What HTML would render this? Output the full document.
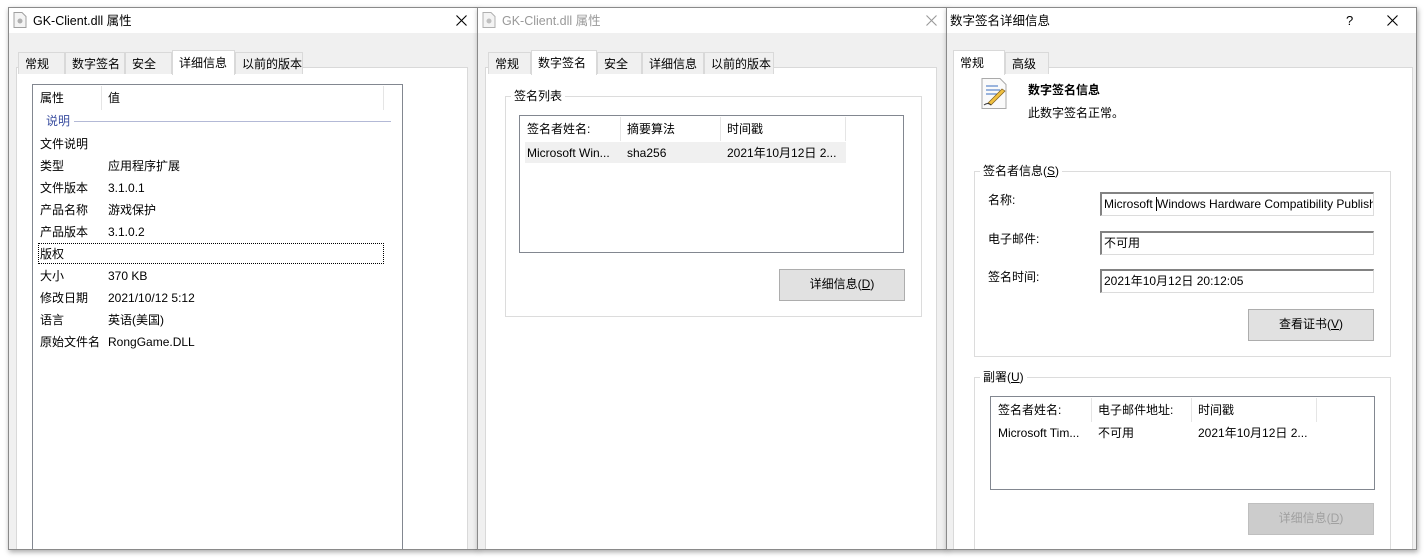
<!DOCTYPE html>
<html><head><meta charset="utf-8"><style>
*{box-sizing:border-box;margin:0;padding:0}
html,body{width:1425px;height:558px;overflow:hidden}
body{background:#fff;position:relative;font-family:"Liberation Sans","Noto Sans CJK SC",sans-serif;font-size:12px;line-height:16px;color:#000}
.a{position:absolute;white-space:nowrap;line-height:16px}
.win{position:absolute;background:#f0f0f0;border:1px solid #8a8a8a;box-shadow:1px 2px 5px rgba(0,0,0,.35);overflow:hidden}
.tb{position:absolute;left:0;right:0;top:0;height:25px;background:#fff}
.tab{position:absolute;top:44px;height:22px;border:1px solid #d9d9d9;border-bottom:none;background:#f0f0f0;padding:3px 0 0 6px;line-height:16px;white-space:nowrap}
.tab.s{top:42px;height:25px;background:#fff;z-index:2;padding-top:4px}
.panel{position:absolute;background:#fff;border:1px solid #d9d9d9}
.box{position:absolute;background:#fff;border:1px solid #828790}
.grp{position:absolute;border:1px solid #dcdcdc}
.gl{position:absolute;background:#fff;padding:0 3px;line-height:16px}
.btn{position:absolute;background:#e1e1e1;border:1px solid #adadad;text-align:center;line-height:29px}
.fld{position:absolute;background:#fff;border:1px solid #dcdcdc;border-top:2px solid #828282;border-left:2px solid #828282;padding:2px 0 0 2px;overflow:hidden;white-space:nowrap;line-height:16px}
.dv{position:absolute;width:1px;background:#e5e5e5}
.x{position:absolute;top:7px}
</style></head><body>

<!-- LEFT WINDOW -->
<div class="win" style="left:8px;top:7px;width:470px;height:543px">
 <div class="tb"></div>
 <svg class="a" style="left:4px;top:4px" width="14" height="16"><path d="M1 .5h8l4 4V15.5H1z" fill="#f4f4f4" stroke="#a0a0a0"/><circle cx="7" cy="9" r="2.5" fill="#b0b0b0"/></svg>
 <div class="a" style="left:24px;top:5px;font-size:12.5px">GK-Client.dll 属性</div>
 <svg class="x" style="left:447px" width="11" height="11"><path d="M.5.5l10 10M10.5.5l-10 10" stroke="#000" stroke-width="1.1"/></svg>
 <div class="panel" style="left:7px;top:59px;width:452px;height:500px"></div>
 <div class="tab" style="left:9px;width:47px">常规</div>
 <div class="tab" style="left:56px;width:60px">数字签名</div>
 <div class="tab" style="left:116px;width:47px">安全</div>
 <div class="tab s" style="left:163px;width:63px">详细信息</div>
 <div class="tab" style="left:226px;width:68px">以前的版本</div>
 <div class="box" style="left:23px;top:76px;width:371px;height:480px">
  <div class="a" style="left:7px;top:5px">属性</div><div class="dv" style="left:68px;top:1px;height:24px"></div>
  <div class="a" style="left:75px;top:5px">值</div><div class="dv" style="left:350px;top:1px;height:24px"></div>
  <div class="a" style="left:13px;top:28px;color:#3a4ea0">说明</div>
  <div class="a" style="left:41px;top:36px;width:317px;height:1px;background:#b3b9d6"></div>
  <div class="a" style="left:7px;top:51px">文件说明</div>
  <div class="a" style="left:7px;top:73px">类型</div><div class="a" style="left:75px;top:73px">应用程序扩展</div>
  <div class="a" style="left:7px;top:95px">文件版本</div><div class="a" style="left:75px;top:95px">3.1.0.1</div>
  <div class="a" style="left:7px;top:117px">产品名称</div><div class="a" style="left:75px;top:117px">游戏保护</div>
  <div class="a" style="left:7px;top:139px">产品版本</div><div class="a" style="left:75px;top:139px">3.1.0.2</div>
  <div class="a" style="left:5px;top:158px;width:346px;height:21px;border:1px dotted #000"></div>
  <div class="a" style="left:7px;top:161px">版权</div>
  <div class="a" style="left:7px;top:183px">大小</div><div class="a" style="left:75px;top:183px">370 KB</div>
  <div class="a" style="left:7px;top:205px">修改日期</div><div class="a" style="left:75px;top:205px">2021/10/12 5:12</div>
  <div class="a" style="left:7px;top:227px">语言</div><div class="a" style="left:75px;top:227px">英语(美国)</div>
  <div class="a" style="left:7px;top:249px">原始文件名</div><div class="a" style="left:75px;top:249px">RongGame.DLL</div>
 </div>
</div>

<!-- MIDDLE WINDOW -->
<div class="win" style="left:477px;top:7px;width:470px;height:543px">
 <div class="tb"></div>
 <svg class="a" style="left:4px;top:4px" width="14" height="16"><path d="M1 .5h8l4 4V15.5H1z" fill="#f4f4f4" stroke="#b0b0b0"/><circle cx="7" cy="9" r="2.5" fill="#c0c0c0"/></svg>
 <div class="a" style="left:24px;top:5px;font-size:12.5px;color:#999">GK-Client.dll 属性</div>
 <svg class="x" style="left:448px" width="11" height="11"><path d="M.5.5l10 10M10.5.5l-10 10" stroke="#999" stroke-width="1.1"/></svg>
 <div class="panel" style="left:7px;top:59px;width:452px;height:500px"></div>
 <div class="tab" style="left:10px;width:43px">常规</div>
 <div class="tab s" style="left:53px;width:66px">数字签名</div>
 <div class="tab" style="left:119px;width:45px">安全</div>
 <div class="tab" style="left:164px;width:62px">详细信息</div>
 <div class="tab" style="left:226px;width:70px">以前的版本</div>
 <div class="grp" style="left:27px;top:88px;width:417px;height:221px"></div>
 <div class="gl" style="left:33px;top:80px">签名列表</div>
 <div class="box" style="left:41px;top:107px;width:385px;height:138px">
  <div class="a" style="left:7px;top:5px">签名者姓名:</div><div class="dv" style="left:100px;top:1px;height:24px"></div>
  <div class="a" style="left:107px;top:5px">摘要算法</div><div class="dv" style="left:200px;top:1px;height:24px"></div>
  <div class="a" style="left:207px;top:5px">时间戳</div><div class="dv" style="left:325px;top:1px;height:24px"></div>
  <div class="a" style="left:5px;top:26px;width:321px;height:21px;background:#f0f0f0"></div>
  <div class="a" style="left:7px;top:29px">Microsoft Win...</div>
  <div class="a" style="left:107px;top:29px">sha256</div>
  <div class="a" style="left:207px;top:29px">2021年10月12日 2...</div>
 </div>
 <div class="btn" style="left:301px;top:261px;width:126px;height:32px">详细信息(<u>D</u>)</div>
</div>

<!-- RIGHT WINDOW -->
<div class="win" style="left:946px;top:7px;width:471px;height:543px">
 <div class="tb"></div>
 <div class="a" style="left:3px;top:5px;font-size:12.5px">数字签名详细信息</div>
 <div class="a" style="left:399px;top:5px;font-size:13px">?</div>
 <svg class="x" style="left:440px" width="11" height="11"><path d="M.5.5l10 10M10.5.5l-10 10" stroke="#000" stroke-width="1.1"/></svg>
 <div class="panel" style="left:6px;top:59px;width:460px;height:500px"></div>
 <div class="tab s" style="left:6px;width:52px">常规</div>
 <div class="tab" style="left:58px;width:44px">高级</div>
 <svg class="a" style="left:33px;top:70px" width="30" height="32"><path d="M2 .5h18l6 6V30.5H2z" fill="#fafafa" stroke="#aaa"/><path d="M6 8h12M6 12h14M6 16h12" stroke="#3a6ec0"/><path d="M8 25l14-14 3 2-14 14z" fill="#f0c040" stroke="#806020" stroke-width=".7"/><path d="M4 27q4-3 7 0" stroke="#333" fill="none"/></svg>
 <div class="a" style="left:81px;top:74px;font-weight:bold">数字签名信息</div>
 <div class="a" style="left:81px;top:97px">此数字签名正常。</div>
 <div class="grp" style="left:27px;top:163px;width:417px;height:186px"></div>
 <div class="gl" style="left:33px;top:155px">签名者信息(<u>S</u>)</div>
 <div class="a" style="left:41px;top:184px">名称:</div>
 <div class="fld" style="left:153px;top:184px;width:274px;height:24px">Microsoft <span style="border-left:1px solid #000">W</span>indows Hardware Compatibility Publisher</div>
 <div class="a" style="left:41px;top:223px">电子邮件:</div>
 <div class="fld" style="left:153px;top:223px;width:274px;height:24px">不可用</div>
 <div class="a" style="left:41px;top:261px">签名时间:</div>
 <div class="fld" style="left:153px;top:261px;width:274px;height:24px">2021年10月12日 20:12:05</div>
 <div class="btn" style="left:301px;top:301px;width:126px;height:32px">查看证书(<u>V</u>)</div>
 <div class="grp" style="left:27px;top:369px;width:417px;height:190px"></div>
 <div class="gl" style="left:33px;top:361px">副署(<u>U</u>)</div>
 <div class="box" style="left:43px;top:388px;width:385px;height:94px">
  <div class="a" style="left:7px;top:5px">签名者姓名:</div><div class="dv" style="left:100px;top:1px;height:24px"></div>
  <div class="a" style="left:107px;top:5px">电子邮件地址:</div><div class="dv" style="left:200px;top:1px;height:24px"></div>
  <div class="a" style="left:207px;top:5px">时间戳</div><div class="dv" style="left:325px;top:1px;height:24px"></div>
  <div class="a" style="left:7px;top:28px">Microsoft Tim...</div>
  <div class="a" style="left:107px;top:28px">不可用</div>
  <div class="a" style="left:207px;top:28px">2021年10月12日 2...</div>
 </div>
 <div class="btn" style="left:301px;top:495px;width:126px;height:32px;background:#cccccc;border-color:#bfbfbf;color:#a0a0a0">详细信息(<u>D</u>)</div>
</div>
</body></html>
